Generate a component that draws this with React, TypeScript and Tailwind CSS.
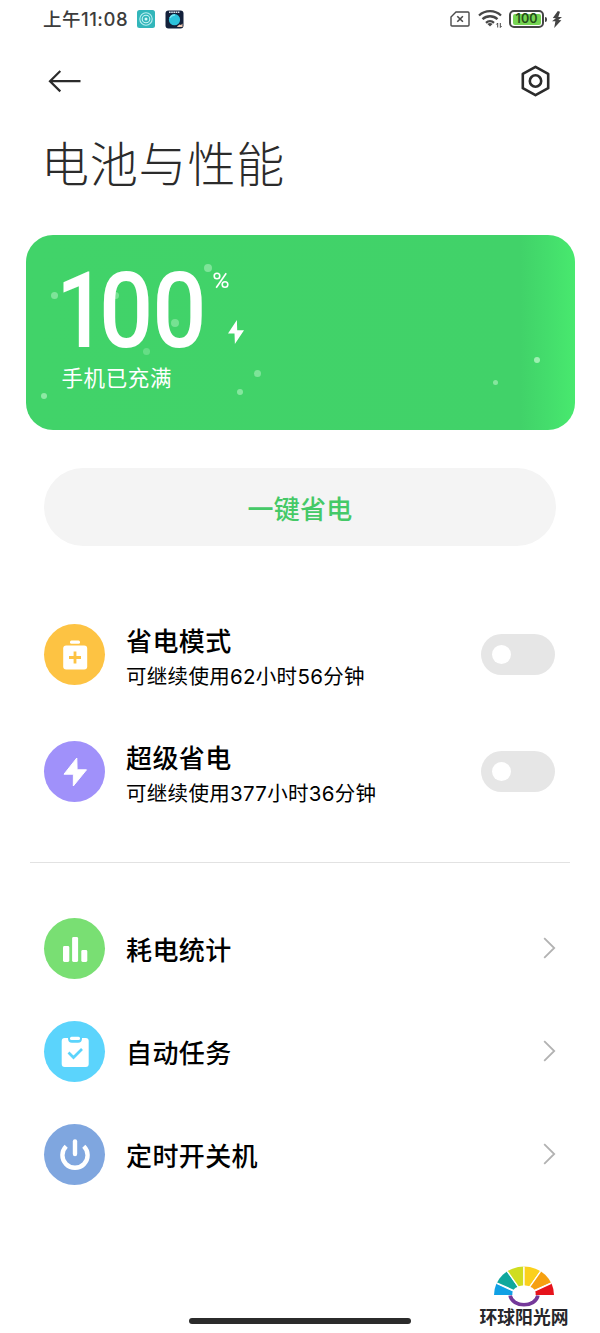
import type { ReactNode } from 'react';

function StatusBar() {
  return (
    <header className="flex h-[38px] items-center justify-between pl-[43px] pr-[38px]">
      <div className="flex items-center">
        <span className="w-[94px] whitespace-nowrap pb-px font-[Inter,'Noto_Sans_CJK_SC',sans-serif] text-[18.5px] leading-[24px] font-medium tracking-[0.5px] text-[#3c3c3c]">上午11:08</span>
        <svg className="h-[18px] w-[18px]" viewBox="0 0 18 18" fill="none">
          <rect width="18" height="18" rx="2.5" fill="#32b6ba" />
          <circle cx="9" cy="9" r="6.2" stroke="#b9eef0" strokeWidth="1.1" />
          <circle cx="9" cy="9" r="3.8" stroke="#c9f4f5" strokeWidth="1.1" />
          <circle cx="9" cy="9" r="1.5" fill="#d8fafa" />
        </svg>
        <svg className="ml-2.5 h-[19px] w-[19px]" viewBox="0 0 19 19" fill="none">
          <rect x="0.5" y="0.5" width="18" height="18" rx="3" fill="#13213b" />
          <path d="M4 2.3h11" stroke="#d9e2ea" strokeWidth="1.6" strokeDasharray="1.6 .6" />
          <circle cx="9.5" cy="9.7" r="5.6" fill="#2cc3dc" />
          <path d="M5 8a5 5 0 0 1 5-3" stroke="#7be7f2" strokeWidth="1.3" />
          <path d="m12 16.5 2.5-2 1.5.5 1.5-1.5v3.5h-5z" fill="#efc9b0" />
        </svg>
      </div>
      <div className="flex items-center">
        <svg className="h-[16px] w-[20px]" viewBox="0 0 20 16" fill="none" stroke="#4a4a4a" strokeWidth="1.4">
          <path d="M6 1h12q1 0 1 1v12q0 1-1 1H2q-1 0-1-1V6z" />
          <path d="m7.3 5.2 5.6 5.6m0-5.6-5.6 5.6" strokeWidth="1.6" />
        </svg>
        <svg className="ml-2 h-[20px] w-[25px]" viewBox="0 0 25 20" fill="none" stroke="#474747" strokeWidth="2.3">
          <path d="M1 6.5a16.2 16.2 0 0 1 22 0M4.5 10.2a11 11 0 0 1 15 0M8 13.8a6 6 0 0 1 8 0" />
          <path d="m12 17.5-2.6-2.4a4 4 0 0 1 5.2 0z" fill="#474747" stroke="none" />
          <path d="M19.7 18.5v-4.5l-1.3 1.5M22.3 14v4.5l1.3-1.5" strokeWidth="1" />
        </svg>
        <div className="ml-[6px] flex h-[18px] w-[35px] items-center justify-center rounded-[5px] border-2 border-[#454545] p-[1.5px]">
          <span className="flex h-full w-full items-center justify-center rounded-[2px] bg-[#76d552] font-[Inter,sans-serif] text-[12.5px] leading-none font-semibold text-[#254f1a]">100</span>
        </div>
        <span className="ml-px h-[5px] w-[2px] rounded-r bg-[#454545]" />
        <svg className="ml-[5px] h-[17px] w-[10px]" viewBox="0 0 10 17" fill="#444">
          <path d="M5.8 0 .8 7l3.1.2L0 10.2l3.4.1L2.2 17 9.4 9.3l-3.1-.2 3.7-3-3.7-.1L8 .7z" />
        </svg>
      </div>
    </header>
  );
}

const bubbles = [
  'left-[25px] top-[57px] size-[7px] opacity-40',
  'left-[178px] top-[29px] size-[8px] opacity-40',
  'left-[86px] top-[57px] size-[7px] opacity-35',
  'left-[145px] top-[84px] size-[8px] opacity-35',
  'left-[117px] top-[113px] size-[7px] opacity-25',
  'left-[228px] top-[135px] size-[7px] opacity-40',
  'left-[211px] top-[154px] size-[6px] opacity-45',
  'left-[15px] top-[158px] size-[6px] opacity-50',
  'left-[508px] top-[122px] size-[6px] opacity-60',
  'left-[467px] top-[145px] size-[5px] opacity-45',
];

function BatteryCard() {
  return (
    <section className="relative ml-[25.5px] mr-[25.5px] mt-[43px] h-[195px] overflow-hidden rounded-[27px] bg-[linear-gradient(90deg,#41d369_0%,#41d269_90%,#44dd6c_95%,#48e96e_100%)] pl-[37px] text-white">
      {bubbles.map((b) => (
        <span key={b} className={`absolute rounded-full bg-[#d9ffe0] ${b}`} />
      ))}
      <div className="relative flex h-[122px] pt-[26px]">
        <span className="-ml-[5px] mt-[6px] h-[90px] w-[155px] origin-left scale-x-[0.91] whitespace-nowrap font-['Roboto'] text-[105px] leading-[90px] font-medium tracking-[-1.2px]">
          <span className="-ml-[2px] inline-block w-[47px] origin-left scale-x-[0.92] tracking-normal">1</span>00
        </span>
        <div className="flex flex-col items-start">
          <svg className="mt-[11px] h-[17px] w-[16px]" viewBox="0 0 16 17" fill="none" stroke="white" strokeWidth="1.6">
            <circle cx="4" cy="4" r="2.8" />
            <circle cx="12" cy="12.5" r="2.8" />
            <path d="m13.2 1.2-10 14.5" />
          </svg>
          <svg className="mt-[31px] ml-[15px] h-[24px] w-[16px]" viewBox="0 0 16 24" fill="white">
            <path d="M8.9 0 0 13.6h6.5L6.9 24 16 10.3H9.2z" />
          </svg>
        </div>
      </div>
      <p className="relative mt-[6px] -ml-px text-[21.5px] leading-[28px] tracking-[0.6px]">手机已充满</p>
    </section>
  );
}

function Toggle() {
  return (
    <button type="button" role="switch" aria-checked="false" className="mr-px flex h-[41px] w-[74px] items-center rounded-full bg-[#e6e6e6] pl-[11px]">
      <span className="size-[19px] rounded-full bg-white" />
    </button>
  );
}

function Chevron() {
  return (
    <svg className="mb-px h-[22px] w-[13px]" viewBox="0 0 13 22" fill="none" stroke="#b2b2b2" strokeWidth="1.8">
      <path d="m1.2 1.2 10 9.8-10 9.8" />
    </svg>
  );
}

type RowProps = { color: string; icon: ReactNode; title: string; note?: string; end: ReactNode };

function Row({ color, icon, title, note, end }: RowProps) {
  return (
    <div className="flex h-[61px] items-center">
      <div className={`flex size-[61px] shrink-0 items-center justify-center rounded-full ${color}`}>{icon}</div>
      <div className={`ml-[21px] flex-1 whitespace-nowrap text-black ${note ? 'pt-[7px]' : ''}`}>
        <h2 className="text-[26px] leading-[36px] font-medium tracking-[0.4px]">{title}</h2>
        {note && <p className="pt-[2px] font-[Inter,'Noto_Sans_CJK_SC',sans-serif] text-[20.5px] leading-[34px] tracking-[0.3px]">{note}</p>}
      </div>
      {end}
    </div>
  );
}

const medkitIcon = (
  <svg className="size-[32px]" viewBox="0 0 32 32" fill="white">
    <rect x="11" y="1.5" width="10" height="3.3" rx="1.5" />
    <rect x="4.2" y="6.5" width="24" height="24" rx="3" />
    <path d="M16 12.5v12M10 18.5h12" stroke="#fdc343" strokeWidth="2.8" />
  </svg>
);
const boltIcon = (
  <svg className="size-[32px]" viewBox="0 0 32 32" fill="white" stroke="white" strokeWidth="1" strokeLinejoin="round">
    <path d="M17.8 2 5 18.2h9.4L14.3 30 27.5 13.8h-9.4z" />
  </svg>
);
const barsIcon = (
  <svg className="size-[32px]" viewBox="0 0 32 32" fill="white">
    <rect x="4" y="13" width="6.3" height="16" rx="1.4" />
    <rect x="13.1" y="4" width="6" height="25" rx="1.4" />
    <rect x="22.3" y="17" width="6" height="12" rx="1.4" />
  </svg>
);
const clipboardIcon = (
  <svg className="size-[32px]" viewBox="0 0 32 32" fill="none">
    <rect x="2.7" y="2" width="27" height="29" rx="3" fill="white" />
    <path d="M10 1v1.5q0 3.2 3 3.2h6q3 0 3-3.2V1" fill="#5bd4fc" stroke="#5bd4fc" strokeWidth="2" />
    <rect x="11" y="0.7" width="10" height="3.2" rx="1.5" fill="white" />
    <path d="m9.5 16.5 5 5 8.5-8.5" stroke="#5bd4fc" strokeWidth="2.7" />
  </svg>
);
const powerIcon = (
  <svg className="size-[34px]" viewBox="0 0 34 34" fill="none" stroke="white" strokeWidth="4.4">
    <path d="M8.2 8.2a12.6 12.6 0 1 0 17.6 0" />
    <path d="M17 3.5v12.5" strokeLinecap="round" />
  </svg>
);

function SiteMark() {
  return (
    <div className="flex w-[92px] flex-col items-center">
      <svg className="h-[42px] w-[62px]" viewBox="0 0 62 42">
        <defs>
          <clipPath id="fan"><path d="M1 30a30 28.5 0 0 1 60 0z" /></clipPath>
        </defs>
        <g clipPath="url(#fan)" stroke="white" strokeWidth="1.3">
          <path d="M31 31h-45V10z" fill="#10a0e4" />
          <path d="M31 30-14 10 5-7z" fill="#10a89c" />
          <path d="M31 30 5-7h26z" fill="#cfdd20" />
          <path d="M31 30V-7h26z" fill="#fbd01c" />
          <path d="M31 30 57-7 76 10z" fill="#f6a010" />
          <path d="M31 31 76 10v21z" fill="#e6131b" />
        </g>
        <path d="M17.2 30.5c2 12.2 25.6 12.2 27.6 0" fill="none" stroke="#75399a" strokeWidth="3.8" />
        <ellipse cx="31" cy="29" rx="11.7" ry="8.8" fill="white" />
      </svg>
      <span className="whitespace-nowrap text-[17.8px] leading-[18px] font-bold text-[#27272b]">环球阳光网</span>
    </div>
  );
}

export default function App() {
  return (
    <main lang="zh-CN" className="relative flex h-[1333px] w-[600px] flex-col overflow-hidden bg-white font-['Noto_Sans_CJK_SC',sans-serif]">
      <StatusBar />
      <nav className="flex h-[86px] items-center justify-between pl-[48px] pr-[49px] text-[#2b2b2b]">
        <svg className="h-[24px] w-[34px]" viewBox="0 0 34 24" fill="none" stroke="currentColor" strokeWidth="2.2">
          <path d="M32.5 12.2H2M12.3 2 2 12.2 12.3 22.4" />
        </svg>
        <svg className="h-[32px] w-[31px]" viewBox="0 0 31 32" fill="none" stroke="currentColor" strokeWidth="2.6" strokeLinejoin="round">
          <path d="m15.5 1.8 12.7 7v14.4l-12.7 7-12.7-7V8.8z" />
          <circle cx="15.5" cy="16" r="5.7" />
        </svg>
      </nav>
      <h1 className="ml-[41px] h-[68px] whitespace-nowrap pt-[5px] text-[48px] leading-[64px] font-light tracking-[0.8px] text-[#2b2b2b]">电池与性能</h1>
      <BatteryCard />
      <button type="button" className="mx-[44px] mt-[38px] h-[78px] shrink-0 rounded-full bg-[#f4f4f4] pt-px text-[26px] font-medium tracking-[0.3px] text-[#45c967]">一键省电</button>
      <section className="mt-[78px] flex flex-col gap-[56px] px-[44px]">
        <Row color="bg-[#fdc343]" icon={medkitIcon} title="省电模式" note="可继续使用62小时56分钟" end={<Toggle />} />
        <Row color="bg-[#a091fa]" icon={boltIcon} title="超级省电" note="可继续使用377小时36分钟" end={<Toggle />} />
      </section>
      <hr className="mx-[30px] mt-[60px] border-[#e2e2e2]" />
      <section className="mt-[55px] flex flex-col gap-[42px] px-[44px]">
        <Row color="bg-[#79df73]" icon={barsIcon} title="耗电统计" end={<Chevron />} />
        <Row color="bg-[#5bd4fc]" icon={clipboardIcon} title="自动任务" end={<Chevron />} />
        <Row color="bg-[#7fa6df]" icon={powerIcon} title="定时开关机" end={<Chevron />} />
      </section>
      <div className="absolute bottom-[8px] left-[478px]"><SiteMark /></div>
      <div className="absolute bottom-[9px] left-[189px] h-[6px] w-[222px] rounded-full bg-[#2b2b2b]" />
    </main>
  );
}
